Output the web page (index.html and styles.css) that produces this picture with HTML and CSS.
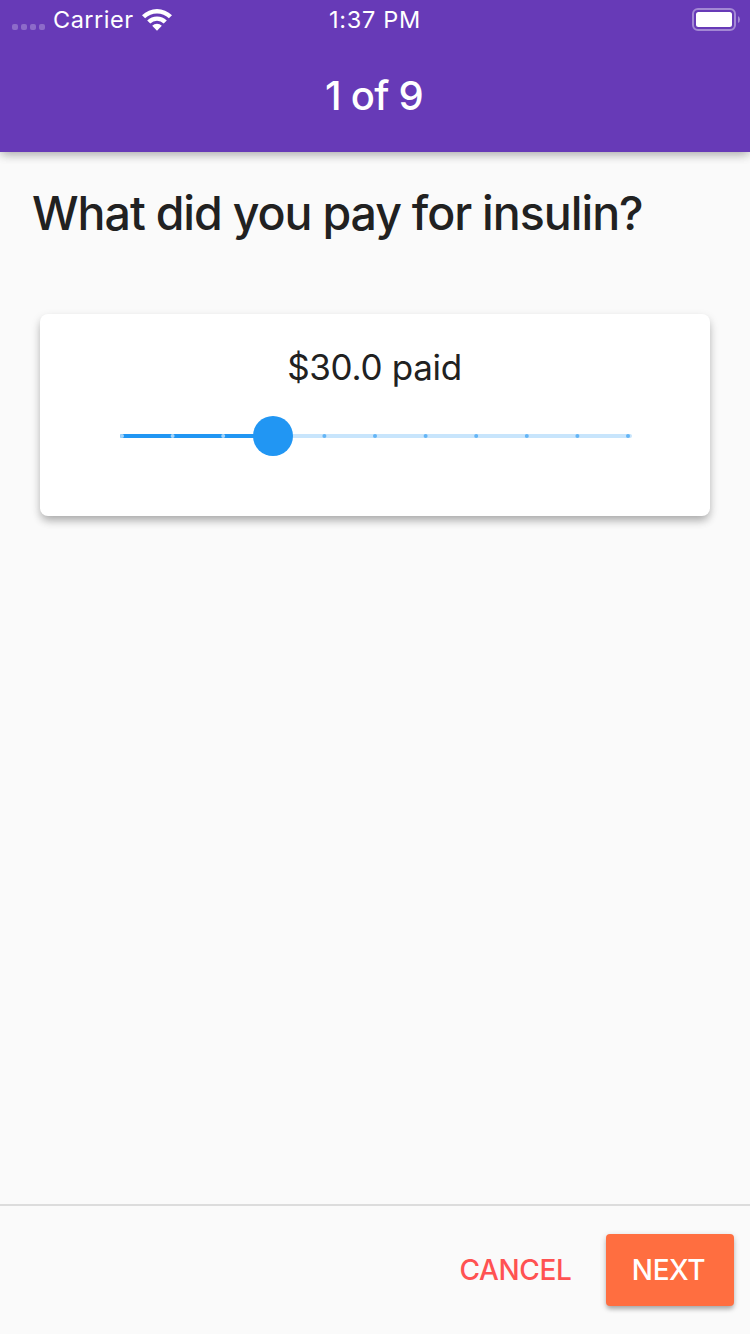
FILE: index.html
```html
<!DOCTYPE html>
<html lang="en">
<head>
<meta charset="utf-8">
<meta name="viewport" content="width=device-width, initial-scale=1">
<title>1 of 9</title>
<link rel="stylesheet" href="styles.css">
</head>
<body>
<div class="screen">
  <header class="app-bar">
    <div class="status-bar">
      <div class="status-left">
        <span class="signal"><i></i><i></i><i></i><i></i></span>
        <span class="carrier">Carrier</span>
        <svg class="wifi" width="32" height="24" viewBox="0 0 32 24" aria-hidden="true">
          <path d="M1 7.2A21.5 21.5 0 0 1 31 7.2L27.9 10.3A17 17 0 0 0 4.1 10.3Z"/>
          <path d="M6.2 12.4A14 14 0 0 1 25.8 12.4L22.7 15.5A9.6 9.6 0 0 0 9.3 15.5Z"/>
          <path d="M11.2 17.7A6.8 6.8 0 0 1 20.8 17.7L16 22.8Z"/>
        </svg>
      </div>
      <span class="time">1:37 PM</span>
      <svg class="battery" width="48" height="24" viewBox="0 0 48 24" aria-hidden="true">
        <rect class="battery-case" x="1" y="1" width="42" height="21" rx="5"/>
        <rect class="battery-level" x="4" y="4" width="36" height="15" rx="2.5"/>
        <path class="battery-cap" d="M46 8Q48 9 48 11.5T46 15Z"/>
      </svg>
    </div>
    <h1 class="title">1 of 9</h1>
  </header>
  <main class="content">
    <h2 class="question">What did you pay for insulin?</h2>
    <section class="card">
      <p class="amount">$30.0 paid</p>
      <svg class="slider" width="512" height="40" viewBox="0 0 512 40" role="slider" aria-valuenow="30" aria-label="Amount paid">
        <rect class="track" x="0" y="18" width="512" height="4" rx="2"/>
        <rect class="track-active" x="0" y="18" width="153" height="4" rx="2"/>
        <g class="tick-active">
          <circle cx="2" cy="20" r="2"/><circle cx="52.6" cy="20" r="2"/><circle cx="103.2" cy="20" r="2"/>
        </g>
        <g class="tick">
          <circle cx="204.4" cy="20" r="2"/><circle cx="255" cy="20" r="2"/><circle cx="305.6" cy="20" r="2"/><circle cx="356.2" cy="20" r="2"/><circle cx="406.8" cy="20" r="2"/><circle cx="457.4" cy="20" r="2"/><circle cx="508" cy="20" r="2"/>
        </g>
        <circle class="thumb" cx="153" cy="20" r="20"/>
      </svg>
    </section>
  </main>
  <footer class="actions">
    <button class="button cancel">CANCEL</button>
    <button class="button next">NEXT</button>
  </footer>
</div>
</body>
</html>
```
FILE: styles.css
```css
* { box-sizing: border-box; }

body {
  margin: 0;
  background: #fafafa;
  color: #212121;
  font-family: Inter, "Liberation Sans", sans-serif;
}

.screen {
  display: flex;
  flex-direction: column;
  height: 1334px;
}

.app-bar {
  height: 152px;
  background: #673ab7;
  color: #fff;
  box-shadow: 0 4px 10px -2px rgba(0, 0, 0, .2), 0 2px 10px rgba(0, 0, 0, .18);
}

.status-bar {
  display: grid;
  grid-template-columns: 1fr auto 1fr;
  align-items: center;
  height: 40px;
  padding: 0 10px 0 12px;
  font-size: 23.5px;
  line-height: 40px;
}

.status-left {
  display: flex;
  align-items: center;
}

.signal {
  display: flex;
  gap: 3px;
  margin: 14px 8px 0 0;
}

.signal i {
  width: 6px;
  height: 6px;
  border-radius: 2px;
  background: rgba(255, 255, 255, .25);
}

.carrier { letter-spacing: .5px; }

.wifi {
  margin-left: 7.5px;
  fill: #fff;
}

.time {
  margin-right: 2px;
  letter-spacing: .7px;
}

.battery { justify-self: end; }
.battery-case { fill: none; stroke: rgba(255, 255, 255, .4); stroke-width: 2; }
.battery-level { fill: #fff; }
.battery-cap { fill: rgba(255, 255, 255, .4); }

.title {
  margin: 0;
  padding-right: 2px;
  font-size: 40px;
  font-weight: 550;
  line-height: 112px;
  text-align: center;
  letter-spacing: -.75px;
}

.content {
  flex: 1;
  padding: 32px 40px 0;
}

.question {
  margin: 0 -8px;
  font-size: 46.5px;
  font-weight: 500;
  line-height: 59px;
  letter-spacing: -1.02px;
  word-spacing: -.5px;
  white-space: nowrap;
}

.card {
  display: flex;
  flex-direction: column;
  align-items: center;
  height: 202px;
  margin-top: 71px;
  padding: 31px 0 0 2px;
  border-radius: 8px;
  background: #fff;
  box-shadow: 0 6px 10px -2px rgba(0, 0, 0, .2), 0 4px 10px rgba(0, 0, 0, .17);
}

.amount {
  margin: 0 3px 27px 0;
  font-size: 35px;
  line-height: 44px;
  letter-spacing: -.3px;
}

.slider { overflow: visible; }
.track { fill: #c8e5fc; }
.track-active, .thumb { fill: #2196f3; }
.tick-active { fill: #a6d5fa; }
.tick { fill: #64b5f6; }

.actions {
  display: flex;
  align-items: flex-start;
  justify-content: flex-end;
  height: 130px;
  padding: 28px 16px 0;
  border-top: 2px solid #dcdcdc;
}

.button {
  height: 72px;
  padding: 0;
  border: 0;
  border-radius: 4px;
  font: 500 28px/72px Inter, "Liberation Sans", sans-serif;
  letter-spacing: -.4px;
  text-align: center;
}

.cancel {
  width: 176px;
  padding-right: 1px;
  margin-right: 2px;
  background: none;
  color: #ff5252;
}

.next {
  width: 128px;
  padding-right: 3px;
  background: #ff6e40;
  color: #fff;
  box-shadow: 0 4px 4px -1px rgba(0, 0, 0, .2), 0 2px 6px rgba(0, 0, 0, .2);
}
```
